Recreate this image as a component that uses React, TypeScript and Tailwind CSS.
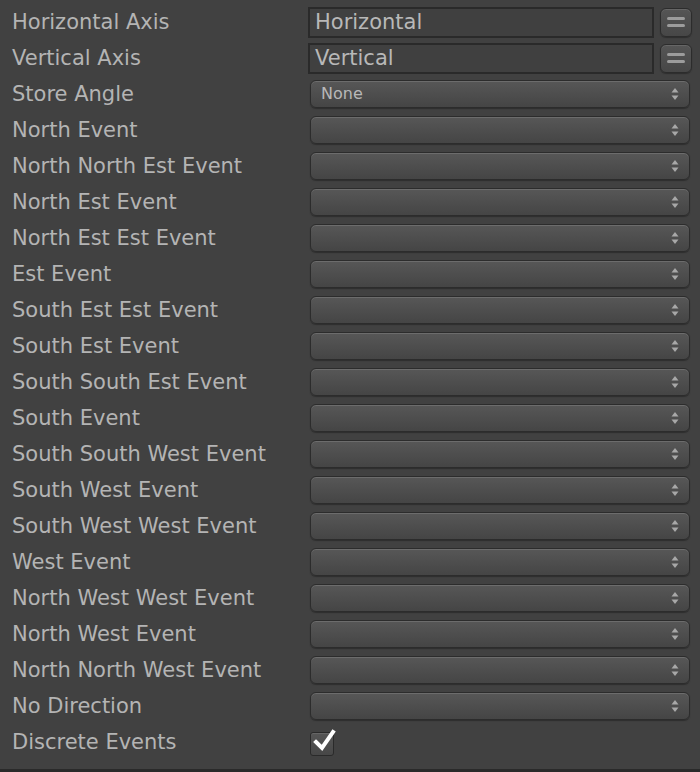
import React from "react";

const labels = [
  "North Event",
  "North North Est Event",
  "North Est Event",
  "North Est Est Event",
  "Est Event",
  "South Est Est Event",
  "South Est Event",
  "South South Est Event",
  "South Event",
  "South South West Event",
  "South West Event",
  "South West West Event",
  "West Event",
  "North West West Event",
  "North West Event",
  "North North West Event",
  "No Direction",
];

function Label({ text }: { text: string }) {
  return (
    <div className="w-[308px] shrink-0 pl-[12px] font-['DejaVu_Sans','Liberation_Sans',sans-serif] text-[21px] leading-none text-[#b4b4b4]">
      {text}
    </div>
  );
}

function Arrows() {
  return (
    <svg width="8" height="14" viewBox="0 0 8 14" className="shrink-0">
      <path d="M4 1 L7.5 5.5 L0.5 5.5 Z" fill="#a8a8a8" />
      <path d="M4 13 L7.5 8.5 L0.5 8.5 Z" fill="#a8a8a8" />
    </svg>
  );
}

function Dropdown({ value }: { value?: string }) {
  return (
    <div className="ml-[2px] flex h-[28px] w-[380px] items-center justify-between rounded-[6px] border border-[#2c2c2c] bg-gradient-to-b from-[#575757] to-[#454545] pl-[10px] pr-[10px] shadow-[inset_0_1px_0_#6c6c6c,0_1px_1px_#2e2e2e]">
      <span className="font-['DejaVu_Sans','Liberation_Sans',sans-serif] text-[16px] leading-none text-[#b8b8b8]">
        {value ?? ""}
      </span>
      <Arrows />
    </div>
  );
}

function TextField({ value }: { value: string }) {
  return (
    <div className="flex items-center gap-[6px]">
      <div className="flex h-[31px] w-[346px] items-center border-2 border-[#2a2a2a] bg-[#404040] pl-[5px]">
        <span className="font-['DejaVu_Sans','Liberation_Sans',sans-serif] text-[21px] leading-none text-[#b8b8b8]">
          {value}
        </span>
      </div>
      <div className="flex h-[29px] w-[32px] flex-col items-center justify-center gap-[4px] rounded-[6px] border border-[#2c2c2c] bg-gradient-to-b from-[#555555] to-[#474747] shadow-[inset_0_1px_0_#666666,0_1px_1px_#2e2e2e]">
        <div className="h-[3px] w-[18px] rounded-full bg-[#9c9c9c]" />
        <div className="h-[3px] w-[18px] rounded-full bg-[#9c9c9c]" />
      </div>
    </div>
  );
}

export default function App() {
  return (
    <div className="flex h-[772px] w-[700px] flex-col border-b-[3px] border-[#2a2a2a] bg-[#414141] pt-[4px]">
      <div className="flex h-[36px] items-center">
        <Label text="Horizontal Axis" />
        <TextField value="Horizontal" />
      </div>
      <div className="flex h-[36px] items-center">
        <Label text="Vertical Axis" />
        <TextField value="Vertical" />
      </div>
      <div className="flex h-[36px] items-center">
        <Label text="Store Angle" />
        <Dropdown value="None" />
      </div>
      {labels.map((l) => (
        <div key={l} className="flex h-[36px] items-center">
          <Label text={l} />
          <Dropdown />
        </div>
      ))}
      <div className="flex h-[36px] items-center">
        <Label text="Discrete Events" />
        <div className="relative ml-[2px] mt-[4px] h-[24px] w-[24px] rounded-[3px] border border-[#2a2a2a] bg-gradient-to-b from-[#565656] to-[#474747] shadow-[inset_0_1px_0_#666666]">
          <svg width="26" height="26" viewBox="0 0 26 26" className="absolute left-[1px] top-[-5px]">
            <path d="M4 14 L10 20 L21 4" fill="none" stroke="#ffffff" strokeWidth="4" strokeLinecap="square" strokeLinejoin="miter" />
          </svg>
        </div>
      </div>
    </div>
  );
}
